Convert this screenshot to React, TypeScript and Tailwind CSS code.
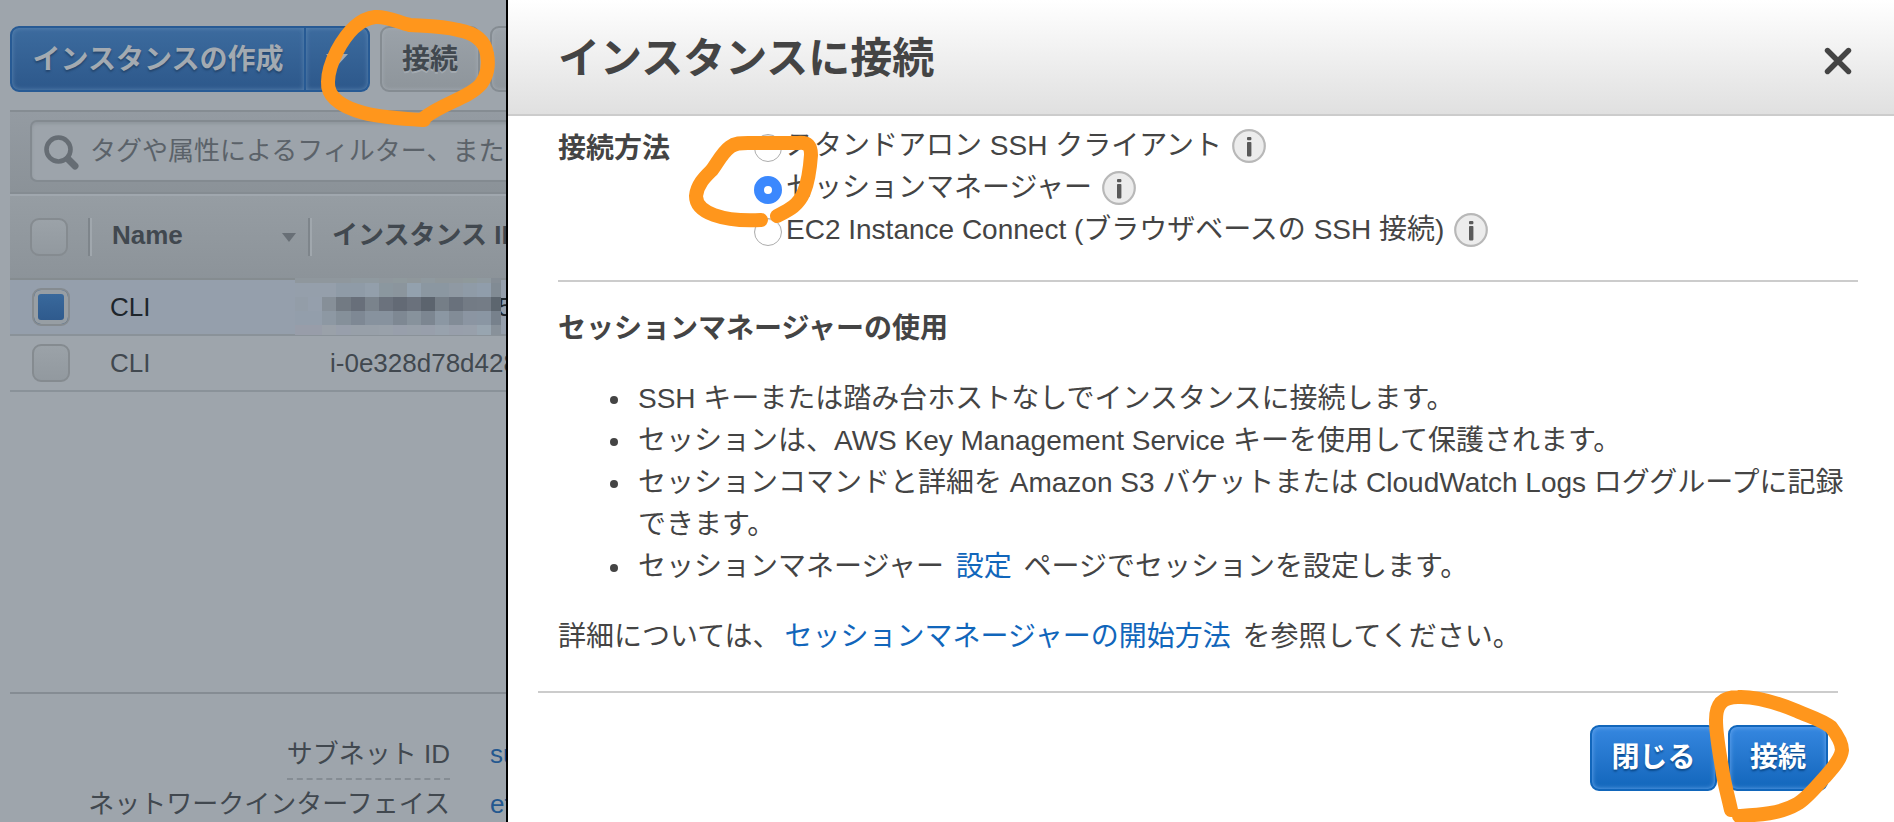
import type { ReactNode } from "react";

const FONT = "font-['Liberation_Sans','Noto_Sans_CJK_JP',sans-serif]";

type StrokeProps = { className: string; viewBox: string; d: string };

function MarkerStroke({ className, viewBox, d }: StrokeProps) {
  return (
    <svg aria-hidden="true" viewBox={viewBox} className={`pointer-events-none absolute z-20 max-w-none ${className}`}>
      <path d={d} fill="none" stroke="#ff961c" strokeWidth="14" strokeLinecap="round" strokeLinejoin="round" />
    </svg>
  );
}

function InfoIcon() {
  return (
    <svg viewBox="0 0 34 34" className="ml-[10px] size-[34px] shrink-0" aria-hidden="true">
      <circle cx="17" cy="17" r="15.8" fill="#ececec" stroke="#b8b8b8" strokeWidth="2.2" />
      <rect x="15" y="8" width="4.4" height="3.2" rx="1" fill="#5a5a5a" />
      <rect x="15" y="13" width="4.4" height="14.4" rx="0.8" fill="#5a5a5a" />
    </svg>
  );
}

const MOSAIC_X = [0, 13, 27, 41, 56, 70, 84, 98, 112, 126, 140, 154, 168, 182, 196, 206];
const MOSAIC_Y = [0, 5, 19, 33, 47, 57];
const MOSAIC = [
  ["#8f979d", "#8f979d", "#8f979d", "#8f979d", "#8f999f", "#8f999f", "#8f979d", "#8f999d", "#8f979b", "#8f999f", "#8f979b", "#8f979b", "#8f999b", "#8f999f", "#858d95"],
  ["#959fab", "#959fab", "#959fab", "#8f9ba7", "#8f9ba7", "#939fab", "#8b979f", "#8b959d", "#93a1ae", "#8b97a1", "#8b97a1", "#8f99a3", "#8f9ba7", "#909dab", "#818b94"],
  ["#939da8", "#959fac", "#868f98", "#727a83", "#686f7a", "#7a838c", "#6b727d", "#636a75", "#6a717c", "#5c646e", "#757e87", "#69717c", "#737b85", "#747c86", "#5d666f"],
  ["#939eab", "#939eab", "#8d98a3", "#85909a", "#7e8894", "#87929e", "#87929e", "#7e8893", "#87929c", "#7c8691", "#8b97a3", "#828c97", "#8b95a2", "#8a96a3", "#77818c"],
  ["#989da9", "#989da9", "#9aa1a9", "#989fab", "#98a0a9", "#98a0a9", "#99a1aa", "#989fab", "#98a0aa", "#989fab", "#98a2ad", "#989fab", "#98a0ab", "#98a5b0", "#88919a"],
];

function Mosaic() {
  return (
    <svg aria-hidden="true" viewBox="0 0 206 57" className="absolute -top-[2px] -left-[13px] z-10 h-[57px] w-[206px] max-w-none" shapeRendering="crispEdges">
      {MOSAIC.map((row, r) =>
        row.map((fill, c) => (
          <rect key={`${r}-${c}`} x={MOSAIC_X[c]} y={MOSAIC_Y[r]} width={MOSAIC_X[c + 1] - MOSAIC_X[c]} height={MOSAIC_Y[r + 1] - MOSAIC_Y[r]} fill={fill} />
        )),
      )}
    </svg>
  );
}

const CHECKBOX =
  "block size-[38px] appearance-none rounded-[9px] border-2 border-[#858b90] bg-linear-to-b from-[#9ba2a8] to-[#92999f]";

function Toolbar() {
  const gray =
    "h-[66px] rounded-[9px] border-2 border-[#858c92] bg-linear-to-b from-[#9ba2a9] to-[#8e959b] pt-[2px] text-[28px] font-bold text-[#41484f] shadow-[inset_0_0_4px_#a5acb3] [text-shadow:0_2px_0_#a3aab0]";
  const blue =
    "h-[66px] border-2 border-[#275a94] bg-linear-to-b from-[#3c6b9e] to-[#2d588b] pt-[2px] text-[28px] font-bold text-[#a3aab1] shadow-[inset_0_0_5px_#5c86b2]";
  return (
    <div className="flex w-[700px] gap-[10px] pl-[10px]">
      <div className="flex">
        <button type="button" className={`${blue} w-[296px] rounded-l-[9px] [text-shadow:0_2px_2px_#24466e]`}>
          インスタンスの作成
        </button>
        <button type="button" aria-label="その他の作成オプション" className={`${blue} flex w-[64px] items-center justify-center rounded-r-[9px] border-l-0`}>
          <svg viewBox="0 0 22 12" className="h-3 w-[22px]" aria-hidden="true">
            <path d="M0 0h22L11 12z" fill="#a3aab1" />
          </svg>
        </button>
      </div>
      <div className="relative">
        <button type="button" className={`${gray} w-[100px]`}>
          接続
        </button>
        <MarkerStroke
          className="-top-[18px] -left-[62px] h-[122px] w-[180px]"
          viewBox="318 8 180 122"
          d="M424 120C405 119 384 118 364 113C342 107 327 98 328 82C328 71 332 61 337 51C347 32 359 19 375 17C388 16 399 23 410 25C427 26 443 26 458 30C475 33 485 41 487 54C489 65 487 76 481 84C469 98 443 103 424 118"
        />
      </div>
      <button type="button" aria-label="アクション" className={`${gray} w-[130px]`} />
    </div>
  );
}

function InstanceTable() {
  return (
    <table className="w-[700px] table-fixed border-separate border-spacing-0 text-left text-[26px]">
      <colgroup>
        <col className="w-[78px]" />
        <col className="w-[220px]" />
        <col />
      </colgroup>
      <thead>
        <tr className="h-[84px] bg-linear-to-b from-[#969da3] to-[#8c9399] text-[#41484f]">
          <th className="border-b-2 border-[#858c90] pl-5">
            <input type="checkbox" aria-label="すべて選択" className={CHECKBOX} />
          </th>
          <th className="border-b-2 border-[#858c90]">
            <div className="flex h-[38px] items-center justify-between border-l-2 border-[#7e858b] pr-3 shadow-[inset_2px_0_0_#a0a7ad]">
              <span className="pb-1 pl-[22px]">Name</span>
              <svg viewBox="0 0 14 9" className="h-[9px] w-[14px]" aria-hidden="true">
                <path d="M0 0h14L7 9z" fill="#686f76" />
              </svg>
            </div>
          </th>
          <th className="border-b-2 border-[#858c90]">
            <div className="flex h-[38px] items-center border-l-2 border-[#7e858b] pb-1 pl-[22px] whitespace-nowrap shadow-[inset_2px_0_0_#a0a7ad]">
              インスタンス ID
            </div>
          </th>
        </tr>
      </thead>
      <tbody>
        <tr className="h-[56px] bg-[#959fac] text-[#1d252b]">
          <td className="border-b-2 border-[#8a9299] pl-[22px]">
            <input
              type="checkbox"
              defaultChecked
              aria-label="CLI を選択"
              className={`${CHECKBOX} checked:shadow-[inset_0_0_0_4px_#979ea4] checked:[background:linear-gradient(#3b6b9e,#2d588b)]`}
            />
          </td>
          <td className="border-b-2 border-[#8a9299] pl-[22px]">CLI</td>
          <td className="relative border-b-2 border-[#8a9299] pl-[190px]">
            <Mosaic />5
          </td>
        </tr>
        <tr className="h-[56px] text-[#41484f]">
          <td className="border-b-2 border-[#8a9299] pl-[22px]">
            <input type="checkbox" aria-label="CLI を選択" className={CHECKBOX} />
          </td>
          <td className="border-b-2 border-[#8a9299] pl-[22px]">CLI</td>
          <td className="border-b-2 border-[#8a9299] pl-[22px]">i-0e328d78d428</td>
        </tr>
      </tbody>
    </table>
  );
}

function InstancesPage() {
  return (
    <section className="relative flex w-[506px] shrink-0 flex-col overflow-hidden bg-[#9ea5ac] pt-[26px]">
      <Toolbar />
      <div className="mt-[18px] ml-[10px]">
        <div className="h-[84px] w-[700px] border-y-2 border-[#858c92] bg-linear-to-b from-[#949ba2] to-[#8b9298] py-2 pl-5">
          <label className="flex h-[62px] items-center gap-[10px] rounded-[7px] border-2 border-[#838a90] bg-[#9da4ab] pl-3 shadow-[inset_0_2px_3px_#8f969d]">
            <svg viewBox="0 0 36 36" className="mt-1 size-9 shrink-0" aria-label="検索">
              <circle cx="14.5" cy="14.5" r="12" fill="none" stroke="#666d74" strokeWidth="4.6" />
              <path d="M24 24l7 7" stroke="#666d74" strokeWidth="7" strokeLinecap="round" />
            </svg>
            <input
              type="text"
              placeholder="タグや属性によるフィルター、またはキーワードによる検索"
              className="w-[600px] min-w-0 bg-transparent text-[26px] outline-none placeholder:text-[#5b6269] placeholder:opacity-100"
            />
          </label>
        </div>
        <div className="border-t-2 border-[#a0a7ae]">
          <InstanceTable />
        </div>
      </div>
      <dl className="mt-[300px] ml-[10px] grid grid-cols-[440px_1fr] gap-x-10 border-t-2 border-[#858c93] pt-[36px] text-[26px] leading-[48px] whitespace-nowrap text-[#41484f]">
        <dt className="text-right">
          <span className="inline-block border-b-2 border-dashed border-[#858c93]">サブネット ID</span>
        </dt>
        <dd>
          <a href="#subnet" className="text-[#24588f]">subnet</a>
        </dd>
        <dt className="-mb-4 text-right">ネットワークインターフェイス</dt>
        <dd className="-mb-4">
          <a href="#eth0" className="text-[#24588f]">eth0</a>
        </dd>
      </dl>
    </section>
  );
}

function MethodOption({ label, checked, children }: { label: string; checked?: boolean; children?: ReactNode }) {
  return (
    <div className="relative flex h-[42px] items-center">
      <label className="flex items-center gap-1">
        <input
          type="radio"
          name="method"
          defaultChecked={checked}
          className="mt-1 size-7 shrink-0 appearance-none rounded-full border border-[#adadad] bg-white shadow-[inset_0_1px_1px_#ddd] checked:border-10 checked:border-[#3b88fd] checked:shadow-none"
        />
        <span>{label}</span>
      </label>
      <InfoIcon />
      {children}
    </div>
  );
}

function ConnectDialog() {
  const button =
    "h-[66px] rounded-[9px] border-2 border-[#1166bb] bg-linear-to-b from-[#3587e0] to-[#1166bb] text-[28px] font-bold text-white shadow-[inset_0_0_5px_#6facf0] [text-shadow:0_2px_2px_#0a4a8c]";
  return (
    <main role="dialog" aria-labelledby="dialog-title" className="min-w-0 flex-1 border-l-2 border-black bg-white text-[28px] leading-[42px] text-[#444]">
      <header className="flex h-[116px] items-center justify-between border-b-2 border-[#ccc] bg-linear-to-b from-white to-[#e0e0e0] pt-1 pr-[42px] pl-[50px]">
        <h1 id="dialog-title" className="text-[42px] font-bold">インスタンスに接続</h1>
        <button type="button" aria-label="ダイアログを閉じる" className="mt-1">
          <svg viewBox="0 0 28 28" className="size-7" aria-hidden="true">
            <path d="M3.5 3.5l21 21M24.5 3.5l-21 21" stroke="#444" strokeWidth="5.4" strokeLinecap="round" />
          </svg>
        </button>
      </header>
      <div className="pt-[9px] pr-9 pl-[50px]">
        <fieldset className="flex border-b-2 border-[#ccc] pb-[29px]">
          <legend className="float-left w-[196px] pt-[3px] font-bold">接続方法</legend>
          <div>
            <MethodOption label="スタンドアロン SSH クライアント" />
            <MethodOption label="セッションマネージャー" checked>
              <MarkerStroke
                className="-top-[35px] -left-[68px] h-[96px] w-[136px]"
                viewBox="686 132 136 96"
                d="M761 220C744 221 728 220 714 215C703 211 696 205 696 196C697 184 706 176 712 170C719 160 723 152 730 147C735 143 741 143 748 143H798C808 142 811 146 811 155C810 169 808 182 804 192C798 206 789 210 777 216"
              />
            </MethodOption>
            <MethodOption label="EC2 Instance Connect (ブラウザベースの SSH 接続)" />
          </div>
        </fieldset>
        <h2 className="mt-[26px] font-bold">セッションマネージャーの使用</h2>
        <ul className="mt-7 list-disc pl-[75px]">
          <li className="pl-[5px]">SSH キーまたは踏み台ホストなしでインスタンスに接続します。</li>
          <li className="pl-[5px]">セッションは、AWS Key Management Service キーを使用して保護されます。</li>
          <li className="pl-[5px]">セッションコマンドと詳細を Amazon S3 バケットまたは CloudWatch Logs ロググループに記録できます。</li>
          <li className="pl-[5px]">
            セッションマネージャー <a href="#settings" className="mx-1 text-[#1166bb]">設定</a> ページでセッションを設定します。
          </li>
        </ul>
        <p className="mt-7">
          詳細については、<a href="#getting-started" className="mx-1 text-[#1166bb]">セッションマネージャーの開始方法</a> を参照してください。
        </p>
      </div>
      <footer className="mt-[33px] mr-14 ml-[30px] flex justify-end gap-[11px] border-t-2 border-[#ccc] pt-8 pr-[10px]">
        <button type="button" className={`${button} w-[127px]`}>閉じる</button>
        <div className="relative">
          <button type="button" className={`${button} w-[100px]`}>接続</button>
          <MarkerStroke
            className="-top-[36px] -left-[20px] h-[134px] w-[144px]"
            viewBox="1708 688 144 134"
            d="M1731 809C1728 795 1724 782 1722 767C1719 749 1716 734 1716 719C1716 705 1721 696 1738 696C1758 695 1780 703 1797 710C1811 716 1822 719 1831 726C1838 735 1842 742 1842 749C1841 759 1831 769 1824 777C1815 787 1806 798 1797 803C1780 813 1757 814 1739 815"
          />
        </div>
      </footer>
    </main>
  );
}

export default function App() {
  return (
    <div className={`flex h-screen overflow-hidden ${FONT}`}>
      <InstancesPage />
      <ConnectDialog />
    </div>
  );
}
